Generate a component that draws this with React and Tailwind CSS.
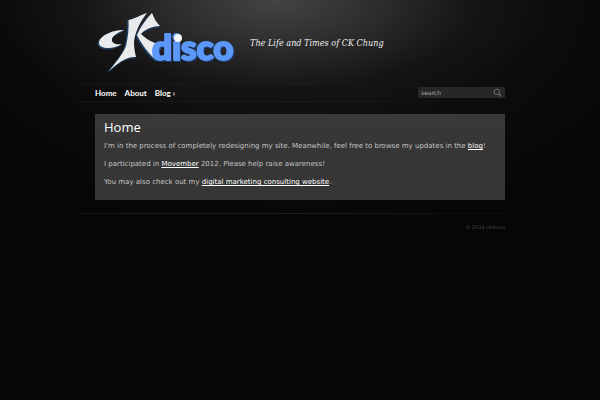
import React, { useState } from "react";

const navLinks = [
  { label: "Home", href: "#home" },
  { label: "About", href: "#about" },
  { label: "Blog ›", href: "#blog" },
];

const Logo = () => (
  <svg
    width="150"
    height="75"
    viewBox="90 5 150 75"
    role="img"
    aria-label="ckdisco"
    className="block shrink-0"
  >
    <defs>
      <g id="mark">
        <path d="M124 30 C112 30 99 36 99 43 C99 49 113 50 122 44 C116 45 111 43 112 39 C113 35 118 33 124 30 Z" />
        <path d="M128.500 20 C134 19 141 15 147 13 C139 23 135 33 134 42 C134 48 135 53 136 57 C126 56 117 64 109 71 C116 62 123 54 126 46 C128 37 129 29 128.500 20 Z" />
        <path d="M152 13 C154 18 156 22 160 26 C152 26 144 30 141 34 C146 39 153 43 162 45 L156 60 C149 54 142 45 137 35 C141 26 146 19 152 13 Z" />
      </g>
    </defs>
    {/* Mark, with its blue edge */}
    <use href="#mark" fill="#1d4266" stroke="#1d4266" x="-1" y="1" />
    <use href="#mark" fill="#e8eaec" />

    {/* Wordmark */}
    <text
      x="152"
      y="60"
      fontSize="35"
      fill="#5c98f8"
      stroke="#5c98f8"
      strokeWidth="2"
      strokeLinejoin="round"
      className="font-['Lato',sans-serif] font-black [filter:drop-shadow(1px_1px_0_#1d3f78)]"
    >
      disco
    </text>
    <circle cx="178" cy="38" r="4" fill="#f4f6f8" />
  </svg>
);

const Divider = () => (
  <div className="h-px bg-linear-to-r from-[#161616] via-[#1e1e1e] to-[#0a0a0a]" />
);

const TextLink = ({ href, children }) => (
  <a href={href} className="text-white underline">
    {children}
  </a>
);

const App = () => {
  const [search, setSearch] = useState("");

  return (
    <div className="min-h-screen bg-[#060606] bg-[radial-gradient(ellipse_280px_125px_at_46%_0,#444444,#2c2c2c_38%,#141414_72%,transparent),radial-gradient(ellipse_400px_240px_at_50%_0,#161616,transparent)] font-['DejaVu_Sans',sans-serif] text-[7px] leading-[10px] text-[#c4c4c4]">
      <div className="mx-auto max-w-[440px]">
        {/* Header */}
        <header className="flex items-center gap-[10px] px-[10px] pt-[5px] pb-[3px]">
          <a href="#home">
            <Logo />
          </a>
          <p className="font-['DejaVu_Serif_Condensed','DejaVu_Serif',serif] text-[9px] text-[#eeeeee] italic">
            The Life and Times of CK Chung
          </p>
        </header>

        {/* Nav + search */}
        <Divider />
        <div className="flex h-[17px] items-center justify-between px-[15px]">
          <nav className="flex gap-2 font-['Lato',sans-serif] text-[8px] font-bold text-white">
            {navLinks.map((link) => (
              <a key={link.label} href={link.href}>
                {link.label}
              </a>
            ))}
          </nav>
          <form
            onSubmit={(e) => e.preventDefault()}
            className="flex h-[11px] w-[87px] items-center bg-[#272727] px-[3px]"
          >
            <input
              type="text"
              aria-label="search"
              placeholder="search"
              value={search}
              onChange={(e) => setSearch(e.target.value)}
              className="w-full min-w-0 bg-transparent text-[6px] outline-none placeholder:text-[#aaaaaa]"
            />
            <button type="submit" aria-label="Submit search">
              <svg
                viewBox="0 0 9 9"
                className="block size-[9px] fill-none stroke-[#777777]"
              >
                <circle cx="3.800" cy="3.800" r="2.700" strokeWidth="0.900" />
                <path d="M5.800 5.800 L8.300 8.300" strokeWidth="1.200" />
              </svg>
            </button>
          </form>
        </div>
        <Divider />

        {/* Content */}
        <main className="mx-[15px] mt-3 mb-[13px] bg-linear-to-b from-[#3a3a3a] to-[#363636] to-30% px-[9px] pt-[5px] pb-[13px]">
          <h1 className="font-['Open_Sans',sans-serif] text-[13px] leading-4 text-white">
            Home
          </h1>
          <div className="mt-[6px] space-y-2">
            <p>
              I'm in the process of completely redesigning my site. Meanwhile,
              feel free to browse my updates in the{" "}
              <TextLink href="#blog">blog</TextLink>!
            </p>
            <p>
              I participated in <TextLink href="#movember">Movember</TextLink>{" "}
              2012. Please help raise awareness!
            </p>
            <p>
              You may also check out my{" "}
              <TextLink href="#consulting">
                digital marketing consulting website
              </TextLink>
              .
            </p>
          </div>
        </main>

        {/* Footer */}
        <Divider />
        <footer className="px-[15px] pt-2 text-right text-[5px] text-[#484848]">
          © 2014 ckdisco
        </footer>
      </div>
    </div>
  );
};

export default App;
